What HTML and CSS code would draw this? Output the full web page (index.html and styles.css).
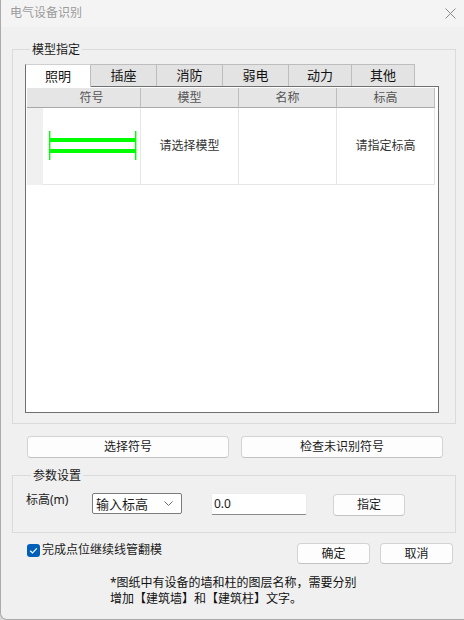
FILE: index.html
```html
<!DOCTYPE html>
<html lang="zh-CN">
<head>
<meta charset="utf-8">
<title>电气设备识别</title>
<link rel="stylesheet" href="styles.css">
</head>
<body>
<div class="dialog">
  <div class="titlebar">
    <span class="title">电气设备识别</span>
    <svg class="close" width="11" height="11" viewBox="0 0 11 11"><path d="M0.5 0.5 L10.5 10.5 M10.5 0.5 L0.5 10.5" stroke="#8a8a8a" stroke-width="1" fill="none"/></svg>
  </div>
  <div class="content">
    <fieldset class="group group-model">
      <legend>模型指定</legend>
      <div class="tabs">
        <div class="tab active">照明</div>
        <div class="tab">插座</div>
        <div class="tab">消防</div>
        <div class="tab">弱电</div>
        <div class="tab narrow">动力</div>
        <div class="tab narrow">其他</div>
      </div>
      <div class="panel">
        <div class="grid">
          <div class="hcell corner"></div>
          <div class="hcell">符号</div>
          <div class="hcell">模型</div>
          <div class="hcell">名称</div>
          <div class="hcell">标高</div>
          <div class="rowhead"></div>
          <div class="cell sym">
            <svg width="90" height="31" viewBox="0 0 90 31">
              <rect x="1" y="1" width="1.4" height="29" fill="#00ff00"/>
              <rect x="87" y="1" width="1.4" height="29" fill="#00ff00"/>
              <rect x="1" y="8" width="87" height="4" fill="#00ff00"/>
              <rect x="1" y="19" width="87" height="4" fill="#00ff00"/>
            </svg>
          </div>
          <div class="cell">请选择模型</div>
          <div class="cell"></div>
          <div class="cell">请指定标高</div>
        </div>
      </div>
    </fieldset>

    <div class="btnrow">
      <button class="btn wide">选择符号</button>
      <button class="btn wide">检查未识别符号</button>
    </div>

    <fieldset class="group group-param">
      <legend>参数设置</legend>
      <div class="paramrow">
        <span class="plabel">标高(m)</span>
        <div class="select">
          <span>输入标高</span>
          <svg width="9" height="5" viewBox="0 0 9 5"><path d="M0.5 0.5 L4.5 4.5 L8.5 0.5" stroke="#6a6a6a" stroke-width="1" fill="none"/></svg>
        </div>
        <div class="input">0.0</div>
        <button class="btn small">指定</button>
      </div>
    </fieldset>

    <div class="footrow">
      <label class="check">
        <span class="box"><svg width="13" height="13" viewBox="0 0 13 13"><path d="M3.2 6.8 L5.5 9 L9.8 4.3" stroke="#ffffff" stroke-width="1.2" fill="none"/></svg></span>
        <span>完成点位继续线管翻模</span>
      </label>
      <div class="actions">
        <button class="btn action">确定</button>
        <button class="btn action">取消</button>
      </div>
    </div>

    <p class="note">*图纸中有设备的墙和柱的图层名称，需要分别<br>增加【建筑墙】和【建筑柱】文字。</p>
  </div>
</div>
</body>
</html>
```

FILE: styles.css
```css
* { box-sizing: border-box; }

html, body {
  margin: 0;
  padding: 0;
  width: 464px;
  height: 620px;
  overflow: hidden;
  background: #d8d8d8;
  font-family: "Noto Sans", "Noto Sans CJK SC", sans-serif;
  font-size: 12px;
  color: #1a1a1a;
}

.dialog {
  width: 464px;
  height: 620px;
  background: #f0f0f0;
  border-left: 1px solid #ababab;
  border-bottom: 1px solid #ababab;
  border-bottom-left-radius: 7px;
  display: flex;
  flex-direction: column;
}

.titlebar {
  height: 27px;
  background: #f4f4f4;
  display: flex;
  align-items: center;
  justify-content: space-between;
  padding: 0 8px 1px 9px;
}

.title {
  font-size: 12px;
  line-height: 14px;
  color: #9b9b9b;
}

.close { margin-top: 1px; }

.content {
  padding: 15px 8px 0 11px;
  display: flex;
  flex-direction: column;
}

.group {
  margin: 0;
  border: 1px solid #dadada;
  min-width: 0;
}

.group legend {
  padding: 0 2px;
  margin-left: 5px;
  font-size: 12px;
  line-height: 15px;
  color: #1a1a1a;
}

.group-model {
  padding: 7px 16px 10px 12px;
}

.tabs {
  display: flex;
  height: 22px;
  position: relative;
  z-index: 1;
}

.tab {
  width: 66px;
  height: 22px;
  background: #e3e3e3;
  border: 1px solid #bdbdbd;
  border-left: none;
  border-bottom: none;
  display: flex;
  align-items: center;
  justify-content: center;
  font-size: 13px;
  line-height: 16px;
  color: #111;
  padding-bottom: 1px;
}

.tab.narrow { width: 63px; }

.tab.active {
  background: #ffffff;
  border-left: 1px solid #707070;
  border-top: 1px solid #cfcfcf;
  height: 23px;
  margin-bottom: -1px;
}

.panel {
  height: 327px;
  border: 1px solid #707070;
  background: #ffffff;
  padding: 1px;
}

.grid {
  display: grid;
  grid-template-columns: 16px 98px 98px 98px 98px;
  grid-template-rows: 20px 77px;
}

.hcell {
  background: #e5e5e5;
  border-bottom: 1px solid #a8a8a8;
  border-right: 1px solid #bdbdbd;
  display: flex;
  align-items: center;
  justify-content: center;
  color: #555;
  font-size: 12px;
  line-height: 14px;
}

.hcell.corner { border-right: none; }

.rowhead {
  background: #f0f0f0;
  border-bottom: 1px solid #f0f0f0;
}

.cell {
  border-right: 1px solid #e6e6e6;
  border-bottom: 1px solid #e6e6e6;
  display: flex;
  align-items: center;
  justify-content: center;
  color: #333;
  font-size: 12px;
  line-height: 14px;
}

.cell.sym {
  justify-content: flex-start;
  padding-left: 5px;
  padding-bottom: 1px;
}

.cell.sym svg { display: block; }

.btn {
  font-family: inherit;
  font-size: 12px;
  line-height: 14px;
  color: #1a1a1a;
  background: #fdfdfd;
  border: 1px solid #d3d3d3;
  border-bottom-color: #c2c2c2;
  border-radius: 4px;
  padding: 0;
  margin: 0;
}

.btnrow {
  margin-top: 12px;
  padding-left: 15px;
  display: flex;
  gap: 12px;
}

.btn.wide {
  width: 202px;
  height: 22px;
}

.group-param {
  margin-top: 10px;
  padding: 10px 10px 17px 13px;
}

.paramrow {
  display: flex;
  align-items: flex-start;
  height: 22px;
}

.plabel {
  width: 66px;
  line-height: 14px;
  font-size: 12px;
  padding-top: 0;
}

.select {
  width: 90px;
  height: 21px;
  background: #ffffff;
  border: 1px solid #7c7c7c;
  border-radius: 2px;
  display: flex;
  align-items: center;
  justify-content: space-between;
  padding: 0 8px 0 3px;
  font-size: 13px;
  line-height: 16px;
}

.input {
  width: 96px;
  height: 22px;
  margin-left: 29px;
  background: #ffffff;
  border: 1px solid #ececec;
  border-bottom: 1px solid #8a8a8a;
  border-radius: 2px;
  font-size: 12px;
  line-height: 14px;
  padding: 3px 0 0 2px;
}

.btn.small {
  width: 72px;
  height: 22px;
  margin-left: 26px;
  margin-top: 1px;
}

.footrow {
  margin-top: 10px;
  padding: 0 3px 0 15px;
  display: flex;
  justify-content: space-between;
  align-items: flex-start;
}

.check {
  display: flex;
  align-items: center;
  gap: 2px;
  font-size: 12px;
  line-height: 14px;
  margin-top: 0;
}

.box {
  width: 13px;
  height: 13px;
  border-radius: 3px;
  background: #005fb8;
  display: block;
}

.box svg { display: block; }

.actions {
  display: flex;
  gap: 10px;
}

.btn.action {
  width: 73px;
  height: 21px;
}

.note {
  margin: 11px 0 0 98px;
  font-size: 12px;
  line-height: 16px;
  color: #111;
}
```
